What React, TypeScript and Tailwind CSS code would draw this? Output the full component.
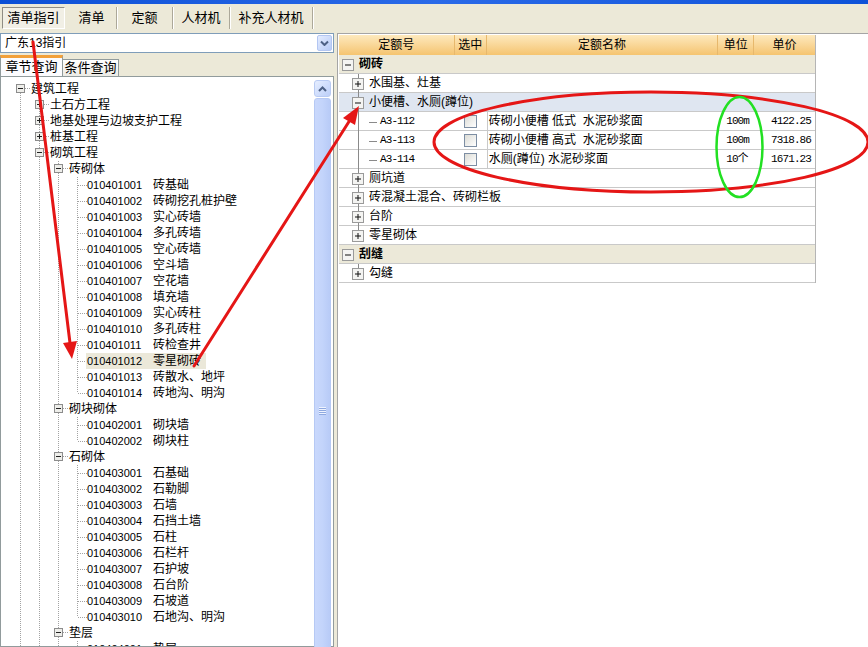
import React from 'react';

type Kind = 'open' | 'closed' | 'leaf';

interface TreeRow {
  level: number;
  kind: Kind;
  label: string;
  code?: string;
  last?: boolean;
  root?: boolean;
  selected?: boolean;
}

const leaves = (items: string[][], selectedCode?: string): TreeRow[] =>
  items.map(([code, label], i) => ({
    level: 3,
    kind: 'leaf',
    code,
    label,
    last: i === items.length - 1,
    selected: code === selectedCode,
  }));

const brick = [
  ['010401001', '砖基础'],
  ['010401002', '砖砌挖孔桩护壁'],
  ['010401003', '实心砖墙'],
  ['010401004', '多孔砖墙'],
  ['010401005', '空心砖墙'],
  ['010401006', '空斗墙'],
  ['010401007', '空花墙'],
  ['010401008', '填充墙'],
  ['010401009', '实心砖柱'],
  ['010401010', '多孔砖柱'],
  ['010401011', '砖检查井'],
  ['010401012', '零星砌砖'],
  ['010401013', '砖散水、地坪'],
  ['010401014', '砖地沟、明沟'],
];

const block = [
  ['010402001', '砌块墙'],
  ['010402002', '砌块柱'],
];

const stone = [
  ['010403001', '石基础'],
  ['010403002', '石勒脚'],
  ['010403003', '石墙'],
  ['010403004', '石挡土墙'],
  ['010403005', '石柱'],
  ['010403006', '石栏杆'],
  ['010403007', '石护坡'],
  ['010403008', '石台阶'],
  ['010403009', '石坡道'],
  ['010403010', '石地沟、明沟'],
];

const treeRows: TreeRow[] = [
  { level: 0, kind: 'open', label: '建筑工程', root: true },
  { level: 1, kind: 'closed', label: '土石方工程' },
  { level: 1, kind: 'closed', label: '地基处理与边坡支护工程' },
  { level: 1, kind: 'closed', label: '桩基工程' },
  { level: 1, kind: 'open', label: '砌筑工程' },
  { level: 2, kind: 'open', label: '砖砌体' },
  ...leaves(brick, '010401012'),
  { level: 2, kind: 'open', label: '砌块砌体' },
  ...leaves(block),
  { level: 2, kind: 'open', label: '石砌体' },
  ...leaves(stone),
  { level: 2, kind: 'open', label: '垫层' },
  ...leaves([['010404001', '垫层']]),
];

const DOT = '#a3a3a3';

// one 19px indent column of the left tree
const Guide = () => (
  <svg width="19" height="16" className="shrink-0">
    <line x1="9.5" y1="0" x2="9.5" y2="16" stroke={DOT} strokeDasharray="1 1" />
  </svg>
);

const NodeSlot = ({ row }: { row: TreeRow }) => {
  const yEnd = row.last ? 8 : 16;
  if (row.kind === 'leaf') {
    return (
      <svg width="19" height="16" className="shrink-0">
        <line x1="9.5" y1="0" x2="9.5" y2={yEnd} stroke={DOT} strokeDasharray="1 1" />
        <line x1="10" y1="8.5" x2="19" y2="8.5" stroke={DOT} strokeDasharray="1 1" />
      </svg>
    );
  }
  return (
    <svg width="19" height="16" className="shrink-0">
      {row.root ? (
        <line x1="9.5" y1="12" x2="9.5" y2="16" stroke={DOT} strokeDasharray="1 1" />
      ) : (
        <line x1="9.5" y1="0" x2="9.5" y2={yEnd} stroke={DOT} strokeDasharray="1 1" />
      )}
      <line x1="14" y1="7.5" x2="19" y2="7.5" stroke={DOT} strokeDasharray="1 1" />
      <rect x="5.5" y="3.5" width="8" height="8" fill="#eeeeea" stroke="#8c8c8c" />
      <line x1="7" y1="7.5" x2="12" y2="7.5" stroke="#222" />
      {row.kind === 'closed' && <line x1="9.5" y1="5" x2="9.5" y2="10" stroke="#222" />}
    </svg>
  );
};

const TreeLine = ({ row }: { row: TreeRow }) => (
  <div className="flex h-4 items-center pl-[10px] whitespace-nowrap">
    {Array.from({ length: row.level }).map((_, i) => (
      <Guide key={i} />
    ))}
    <NodeSlot row={row} />
    {row.kind === 'leaf' ? (
      <span
        className={`-ml-[1px] flex h-4 items-center pl-[1px] pr-[5px] ${row.selected ? 'bg-[#ebe8d9]' : ''}`}
      >
        <span className="w-[66px] text-[11px] leading-4">{row.code}</span>
        <span className="text-[12px] leading-4">{row.label}</span>
      </span>
    ) : (
      <span className="pl-[1px] text-[12px] leading-4">{row.label}</span>
    )}
  </div>
);

const ScrollBar = () => (
  <div className="mr-[2px] flex w-[17px] shrink-0 flex-col pt-[3px]">
    <div className="flex h-[17px] shrink-0 items-center justify-center rounded-[3px] border border-[#b9cbf3] bg-linear-to-br from-[#e6eeff] to-[#bccff9]">
      <svg width="9" height="6" viewBox="0 0 9 6">
        <path d="M1 5 L4.5 1.5 L8 5" fill="none" stroke="#4d6185" strokeWidth="2" />
      </svg>
    </div>
    <div className="mt-[1px] flex h-[624px] shrink-0 items-center justify-center rounded-[3px] border border-[#b6c9f4] bg-linear-to-r from-[#c9d8fc] via-[#c3d4fb] to-[#b8cbf7]">
      <div className="flex w-[7px] flex-col gap-[1px]">
        {[0, 1, 2, 3].map(i => (
          <div key={i} className="h-[1px] bg-[#eef3ff] shadow-[0_1px_0_#8fa9e0]" />
        ))}
      </div>
    </div>
  </div>
);

interface GridRow {
  type: 'group' | 'sub' | 'item';
  label?: string;
  open?: boolean;
  last?: boolean;
  selected?: boolean;
  code?: string;
  unit?: string;
  price?: string;
}

const gridRows: GridRow[] = [
  { type: 'group', label: '砌砖' },
  { type: 'sub', label: '水围基、灶基' },
  { type: 'sub', label: '小便槽、水厕(蹲位)', open: true, selected: true },
  { type: 'item', code: 'A3-112', label: '砖砌小便槽 低式  水泥砂浆面', unit: '100m', price: '4122.25' },
  { type: 'item', code: 'A3-113', label: '砖砌小便槽 高式  水泥砂浆面', unit: '100m', price: '7318.86' },
  { type: 'item', code: 'A3-114', label: '水厕(蹲位) 水泥砂浆面', unit: '10个', price: '1671.23' },
  { type: 'sub', label: '厕坑道' },
  { type: 'sub', label: '砖混凝土混合、砖砌栏板' },
  { type: 'sub', label: '台阶' },
  { type: 'sub', label: '零星砌体', last: true },
  { type: 'group', label: '刮缝' },
  { type: 'sub', label: '勾缝', last: true },
];

const GRID_LINE = '#8a8a8a';
const MONO = "font-['Liberation_Mono','Noto_Sans_CJK_SC',monospace] text-[11px] tracking-[-0.9px]";

const Box = ({ open, x }: { open: boolean; x: number }) => (
  <>
    <rect x={x + 0.5} y="4.5" width="11" height="11" fill="#f4f4f2" stroke="#9a9a9a" />
    <line x1={x + 3} y1="10" x2={x + 9} y2="10" stroke="#111" />
    {!open && <line x1={x + 6} y1="7" x2={x + 6} y2="13" stroke="#111" />}
  </>
);

const GridLine = ({ row }: { row: GridRow }) => {
  if (row.type === 'group') {
    return (
      <div className="flex h-[19px] items-center border-b border-[#c9c9c9] bg-[#ece9d9]">
        <svg width="20" height="19" className="shrink-0">
          <Box open x={3} />
        </svg>
        <span className="text-[12px] font-bold">{row.label}</span>
      </div>
    );
  }
  if (row.type === 'sub') {
    return (
      <div
        className={`flex h-[19px] items-center border-b border-[#c9c9c9] ${row.selected ? 'bg-[#dfe6f1]' : 'bg-white'}`}
      >
        <svg width="30" height="19" className="shrink-0">
          <line x1="19.5" y1="0" x2="19.5" y2={row.last ? 10 : 19} stroke={GRID_LINE} />
          <Box open={!!row.open} x={13} />
        </svg>
        <span className="whitespace-pre text-[12px]">{row.label}</span>
      </div>
    );
  }
  return (
    <div className="flex h-[19px] items-center border-b border-[#c9c9c9] bg-white">
      <div className="flex h-full w-[116px] items-center">
        <svg width="41" height="19" className="shrink-0">
          <line x1="19.5" y1="0" x2="19.5" y2="19" stroke={GRID_LINE} />
          <line x1="30" y1="10.5" x2="38" y2="10.5" stroke={GRID_LINE} />
        </svg>
        <span className={MONO}>{row.code}</span>
      </div>
      <div className="flex h-full w-[32px] items-center justify-center">
        <div className="h-[13px] w-[13px] border border-[#7d8ea3] bg-linear-to-br from-[#dcdcd6] to-white" />
      </div>
      <div className="flex h-full w-[232px] items-center border-l border-[#c9c9c9] pl-[1px]">
        <span className="whitespace-pre text-[12px]">{row.label}</span>
      </div>
      <div className={`flex h-full w-[36px] items-center pl-[8px] ${MONO}`}>{row.unit}</div>
      <div className={`flex h-full w-[61px] items-center justify-end pr-[4px] ${MONO}`}>{row.price}</div>
    </div>
  );
};

const topTabs = [
  { label: '清单指引', w: 'w-[63px]', active: true },
  { label: '清单', w: 'w-[50px]' },
  { label: '定额', w: 'w-[56px]' },
  { label: '人材机', w: 'w-[57px]' },
  { label: '补充人材机', w: 'w-[83px]' },
];

const Annotations = () => (
  <svg width="868" height="647" className="pointer-events-none absolute left-0 top-0">
    <g stroke="#e51616" strokeWidth="3" fill="none" strokeLinecap="round">
      <line x1="33" y1="42" x2="70" y2="343" />
      <line x1="194" y1="366" x2="350" y2="120" />
      <ellipse cx="651" cy="142" rx="217" ry="50" />
    </g>
    <polygon points="72,359 77,341 63,343" fill="#e51616" />
    <polygon points="359,106 355,125 343,118" fill="#e51616" />
    <ellipse cx="739.5" cy="147" rx="23" ry="50" fill="none" stroke="#22e022" strokeWidth="2.5" />
  </svg>
);

const App = () => {
  return (
    <div className="relative h-[647px] w-[868px] overflow-hidden bg-[#ece9d8] font-['Liberation_Sans','Noto_Sans_CJK_SC',sans-serif] text-black">
      {/* title bar strip */}
      <div className="h-[4px] bg-linear-to-r from-[#0a4fd6] via-[#2a6ae8] to-[#0d52d8]" />

      {/* top tabs */}
      <div className="flex h-[28px] items-start pl-[2px] pt-[3px]">
        {topTabs.map(tab => (
          <div
            key={tab.label}
            className={`flex h-[22px] items-center justify-center text-[13px] ${tab.w} ${
              tab.active
                ? 'mr-[2px] border border-t-[#8f8d84] border-l-[#8f8d84] border-r-white border-b-white bg-[#f1efe5]'
                : 'border-r border-r-[#aca899] shadow-[1px_0_0_#fff]'
            }`}
          >
            {tab.label}
          </div>
        ))}
      </div>

      <div className="flex h-[615px]">
        {/* left pane */}
        <div className="flex w-[334px] shrink-0 flex-col">
          <div className="mt-[1px] flex h-[20px] items-center border border-[#7f9db9] bg-white pl-[4px] pr-[1px]">
            <span className="flex-1 text-[12px]">广东13指引</span>
            <div className="flex h-[16px] w-[15px] items-center justify-center rounded-[2px] border border-[#b3c6f2] bg-linear-to-br from-[#e4ecff] to-[#b7cbf6]">
              <svg width="9" height="6" viewBox="0 0 9 6">
                <path d="M1 1.5 L4.5 5 L8 1.5" fill="none" stroke="#4d6185" strokeWidth="2" />
              </svg>
            </div>
          </div>

          <div className="mt-[2px] flex h-[21px] items-end">
            <div className="flex h-[21px] w-[63px] items-center justify-center border-x border-t-[3px] border-x-[#919b9c] border-t-[#f2a13b] bg-[#fcfcfe] text-[13px]">
              章节查询
            </div>
            <div className="flex h-[17px] w-[56px] items-center justify-center border-r border-t border-[#919b9c] bg-linear-to-b from-white to-[#ecebe5] text-[13px]">
              条件查询
            </div>
          </div>

          <div className="flex min-h-0 flex-1 border border-[#919b9c] bg-white">
            <div className="min-w-0 flex-1 overflow-hidden pt-[4px]">
              {treeRows.map((row, i) => (
                <TreeLine key={i} row={row} />
              ))}
            </div>
            <ScrollBar />
          </div>
        </div>

        {/* right pane */}
        <div className="ml-[3px] mt-[1px] flex-1 border-l border-t border-[#a5a5a5] bg-white pl-[1px] pt-[1px]">
          <div className="w-[477px] border-r border-[#b5b5b5]">
            <div className="flex h-[20px] bg-linear-to-b from-[#fde9bd] to-[#f5c46f] text-[12px]">
              <div className="flex w-[116px] items-center justify-center border-r border-[#e7b86c]">定额号</div>
              <div className="flex w-[32px] items-center justify-center border-r border-[#e7b86c]">选中</div>
              <div className="flex w-[232px] items-center justify-center border-r border-[#e7b86c]">定额名称</div>
              <div className="flex w-[36px] items-center justify-center border-r border-[#e7b86c]">单位</div>
              <div className="flex w-[61px] items-center justify-center">单价</div>
            </div>
            {gridRows.map((row, i) => (
              <GridLine key={i} row={row} />
            ))}
          </div>
        </div>
      </div>

      <Annotations />
    </div>
  );
};

export default App;
